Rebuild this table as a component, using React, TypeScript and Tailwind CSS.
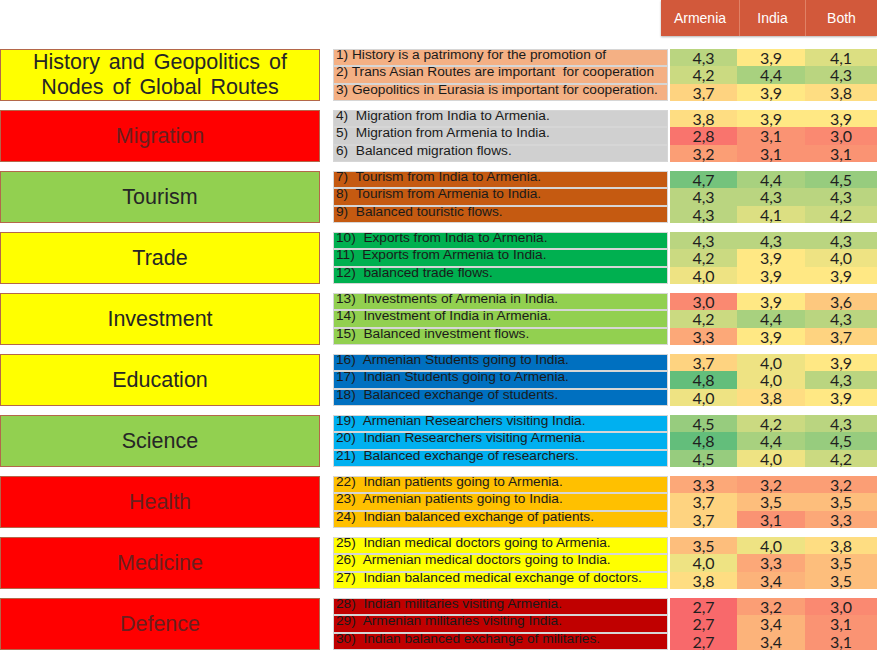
import React from "react";

type Category = {
  label: string[];
  box: string;
  ink: string;
  rowBg: string;
  items: string[];
  values: number[][];
};

const CATEGORIES: Category[] = [
  {
    label: ["History and Geopolitics of", "Nodes of Global Routes"],
    box: "bg-[#ffff00]",
    ink: "text-[#262626]",
    rowBg: "bg-[#f4b084]",
    items: [
      "1) History is a patrimony for the promotion of",
      "2) Trans Asian Routes are important  for cooperation",
      "3) Geopolitics in Eurasia is important for cooperation.",
    ],
    values: [
      [4.3, 3.9, 4.1],
      [4.2, 4.4, 4.3],
      [3.7, 3.9, 3.8],
    ],
  },
  {
    label: ["Migration"],
    box: "bg-[#ff0000]",
    ink: "text-[#6a1f1f]",
    rowBg: "bg-[#d0d0d0]",
    items: [
      "4)  Migration from India to Armenia.",
      "5)  Migration from Armenia to India.",
      "6)  Balanced migration flows.",
    ],
    values: [
      [3.8, 3.9, 3.9],
      [2.8, 3.1, 3.0],
      [3.2, 3.1, 3.1],
    ],
  },
  {
    label: ["Tourism"],
    box: "bg-[#92d050]",
    ink: "text-[#262626]",
    rowBg: "bg-[#c55a11]",
    items: [
      "7)  Tourism from India to Armenia.",
      "8)  Tourism from Armenia to India.",
      "9)  Balanced touristic flows.",
    ],
    values: [
      [4.7, 4.4, 4.5],
      [4.3, 4.3, 4.3],
      [4.3, 4.1, 4.2],
    ],
  },
  {
    label: ["Trade"],
    box: "bg-[#ffff00]",
    ink: "text-[#262626]",
    rowBg: "bg-[#00b050]",
    items: [
      "10)  Exports from India to Armenia.",
      "11)  Exports from Armenia to India.",
      "12)  balanced trade flows.",
    ],
    values: [
      [4.3, 4.3, 4.3],
      [4.2, 3.9, 4.0],
      [4.0, 3.9, 3.9],
    ],
  },
  {
    label: ["Investment"],
    box: "bg-[#ffff00]",
    ink: "text-[#262626]",
    rowBg: "bg-[#92d050]",
    items: [
      "13)  Investments of Armenia in India.",
      "14)  Investment of India in Armenia.",
      "15)  Balanced investment flows.",
    ],
    values: [
      [3.0, 3.9, 3.6],
      [4.2, 4.4, 4.3],
      [3.3, 3.9, 3.7],
    ],
  },
  {
    label: ["Education"],
    box: "bg-[#ffff00]",
    ink: "text-[#262626]",
    rowBg: "bg-[#0070c0]",
    items: [
      "16)  Armenian Students going to India.",
      "17)  Indian Students going to Armenia.",
      "18)  Balanced exchange of students.",
    ],
    values: [
      [3.7, 4.0, 3.9],
      [4.8, 4.0, 4.3],
      [4.0, 3.8, 3.9],
    ],
  },
  {
    label: ["Science"],
    box: "bg-[#92d050]",
    ink: "text-[#262626]",
    rowBg: "bg-[#00b0f0]",
    items: [
      "19)  Armenian Researchers visiting India.",
      "20)  Indian Researchers visiting Armenia.",
      "21)  Balanced exchange of researchers.",
    ],
    values: [
      [4.5, 4.2, 4.3],
      [4.8, 4.4, 4.5],
      [4.5, 4.0, 4.2],
    ],
  },
  {
    label: ["Health"],
    box: "bg-[#ff0000]",
    ink: "text-[#6a1f1f]",
    rowBg: "bg-[#ffc000]",
    items: [
      "22)  Indian patients going to Armenia.",
      "23)  Armenian patients going to India.",
      "24)  Indian balanced exchange of patients.",
    ],
    values: [
      [3.3, 3.2, 3.2],
      [3.7, 3.5, 3.5],
      [3.7, 3.1, 3.3],
    ],
  },
  {
    label: ["Medicine"],
    box: "bg-[#ff0000]",
    ink: "text-[#6a1f1f]",
    rowBg: "bg-[#ffff00]",
    items: [
      "25)  Indian medical doctors going to Armenia.",
      "26)  Armenian medical doctors going to India.",
      "27)  Indian balanced medical exchange of doctors.",
    ],
    values: [
      [3.5, 4.0, 3.8],
      [4.0, 3.3, 3.5],
      [3.8, 3.4, 3.5],
    ],
  },
  {
    label: ["Defence"],
    box: "bg-[#ff0000]",
    ink: "text-[#6a1f1f]",
    rowBg: "bg-[#c00000]",
    items: [
      "28)  Indian militaries visiting Armenia.",
      "29)  Armenian militaries visiting India.",
      "30)  Indian balanced exchange of militaries.",
    ],
    values: [
      [2.7, 3.2, 3.0],
      [2.7, 3.4, 3.1],
      [2.7, 3.4, 3.1],
    ],
  },
];

// excel style red-yellow-green scale
const RED = [248, 105, 107];
const YELLOW = [255, 232, 132];
const GREEN = [99, 190, 123];

function scaleColor(v: number) {
  const min = 2.7;
  const mid = 3.9;
  const max = 4.8;
  let from = RED;
  let to = YELLOW;
  let t = 0;
  if (v <= mid) {
    t = (v - min) / (mid - min);
  } else {
    from = YELLOW;
    to = GREEN;
    t = (v - mid) / (max - mid);
  }
  const c = from.map((f, i) => Math.round(f + (to[i] - f) * t));
  return `rgb(${c[0]}, ${c[1]}, ${c[2]})`;
}

const fmt = (v: number) => v.toFixed(1).replace(".", ",");

function Header() {
  return (
    <div className="flex h-[36px] justify-end">
      <div className="flex w-[216px] bg-[#d2593b] text-[14px] text-white shadow-[0_1px_2px_rgba(0,0,0,0.3)]">
        <div className="flex w-[79px] items-center justify-center border-r border-[#e08266]">Armenia</div>
        <div className="flex w-[66px] items-center justify-center border-r border-[#e08266]">India</div>
        <div className="flex flex-1 items-center justify-center">Both</div>
      </div>
    </div>
  );
}

function CategoryRow({ cat }: { cat: Category }) {
  return (
    <div className="flex h-[52px]">
      <div
        className={`flex w-[320px] shrink-0 flex-col items-center justify-center border-[1.5px] border-[#b4674a] text-[21.5px] leading-[25px] [word-spacing:3px] ${cat.box} ${cat.ink}`}
      >
        {cat.label.map((l) => (
          <div key={l}>{l}</div>
        ))}
      </div>
      <div className="ml-[13px] flex w-[335px] shrink-0 flex-col gap-[2px] bg-[#d6d6d6] p-[1px]">
        {cat.items.map((item) => (
          <div key={item} className={`flex-1 pl-[2px] ${cat.rowBg}`}>
            <div className="-mt-[2px] whitespace-pre text-[13.7px] leading-[14px] text-[#1a1a1a]">{item}</div>
          </div>
        ))}
      </div>
      <div className="ml-[2px] flex flex-1 flex-col font-['Lato',sans-serif] text-[16px] text-[#1f1f1f]">
        {cat.values.map((row, ri) => (
          <div key={ri} className="flex flex-1">
            {row.map((v, ci) => (
              <div
                key={ci}
                className={`flex items-start justify-center pt-[1px] leading-[16px] ${ci === 0 ? "w-[67px]" : ci === 1 ? "w-[68px]" : "flex-1"}`}
                style={{ backgroundColor: scaleColor(v) }}
              >
                {fmt(v)}
              </div>
            ))}
          </div>
        ))}
      </div>
    </div>
  );
}

export default function App() {
  return (
    <div className="h-[655px] w-[877px] overflow-hidden bg-white font-['Liberation_Sans',Arial,sans-serif]">
      <Header />
      <div className="mt-[13px] flex flex-col gap-[9px]">
        {CATEGORIES.map((c) => (
          <CategoryRow key={c.items[0]} cat={c} />
        ))}
      </div>
    </div>
  );
}
